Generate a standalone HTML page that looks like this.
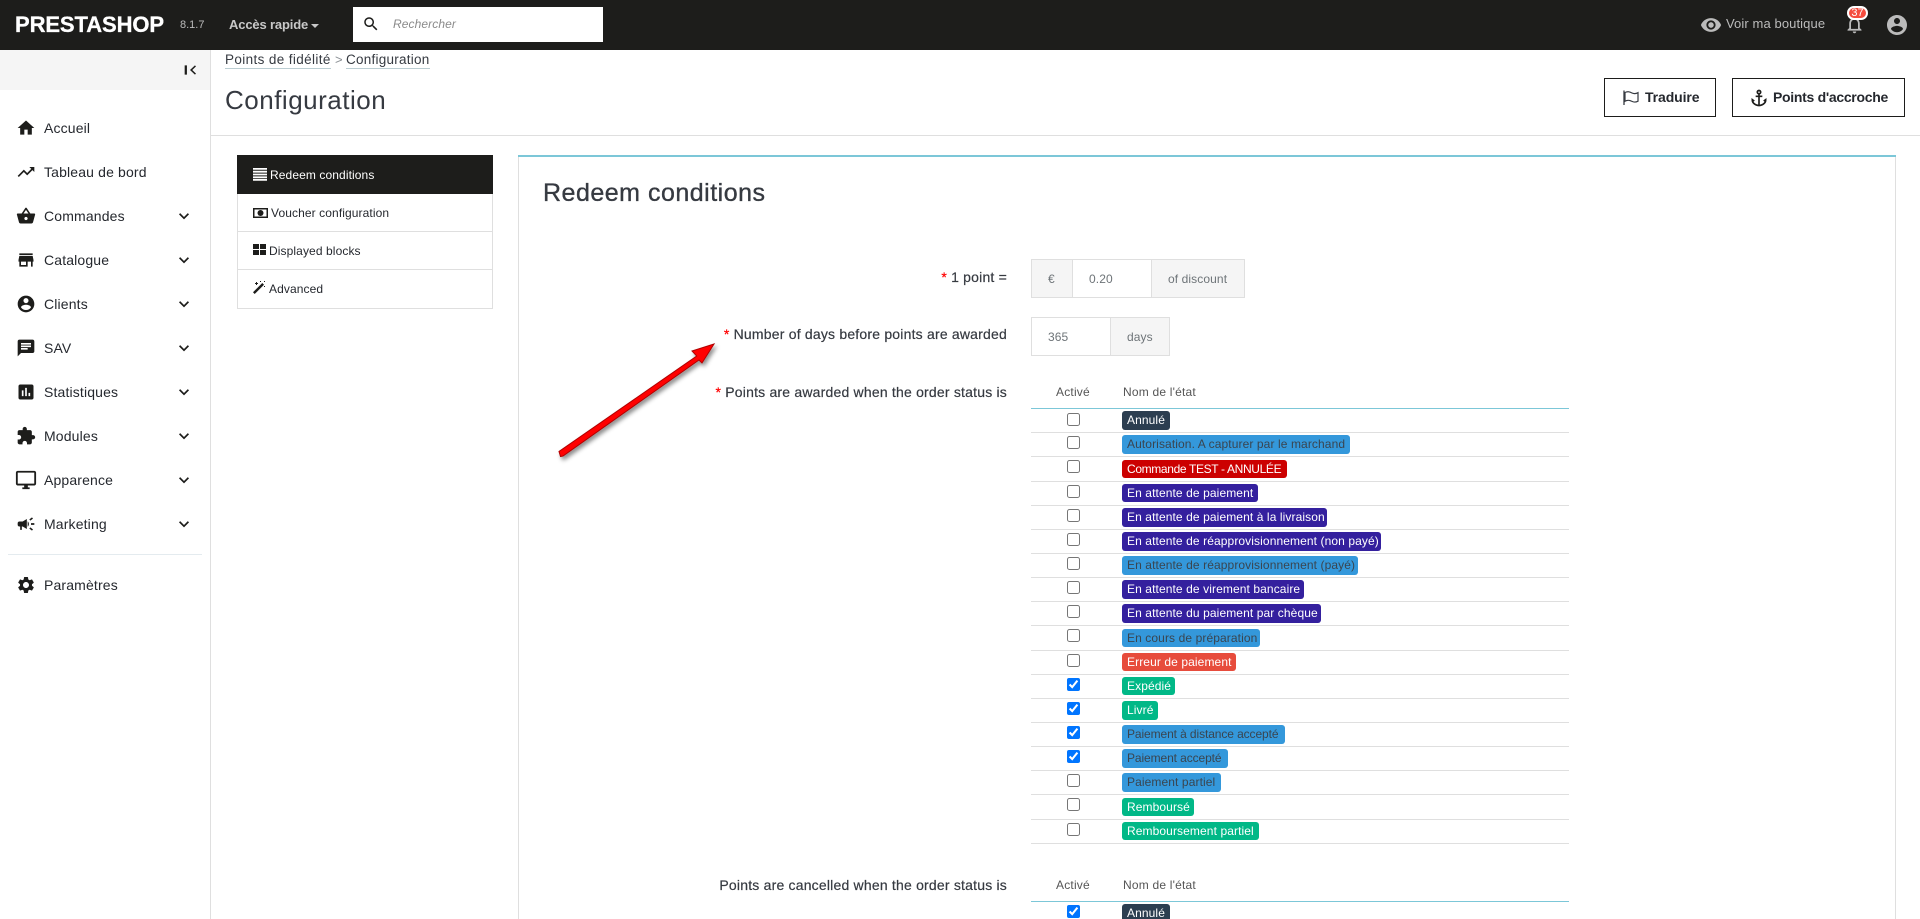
<!DOCTYPE html>
<html lang="fr"><head><meta charset="utf-8"><title>Configuration</title>
<style>
html,body{margin:0;padding:0;width:1920px;height:919px;overflow:hidden;background:#fff}
body{position:relative;font-family:"Liberation Sans",sans-serif;color:#363a41}
.t{position:absolute;white-space:nowrap;line-height:20px;height:20px}
.b{position:absolute}
svg{position:absolute;display:block}
.n{left:44px;font-size:14px;letter-spacing:.15px;color:#25282e}
.r{right:913px;font-size:14px;letter-spacing:.2px;color:#363a41;text-align:right;-webkit-text-stroke:.2px #363a41}
.r i{font-style:normal;color:#f00;-webkit-text-stroke:.2px #f00}
.g{font-size:12px;letter-spacing:.1px;color:#6e7478}
.m{font-size:12px;letter-spacing:.1px;color:#25282e}
.h{font-size:12px;color:#555;letter-spacing:.2px}
.bd{position:absolute;left:1122px;border-radius:3px;font-size:12px;letter-spacing:.1px;padding-left:5px;box-sizing:border-box;white-space:nowrap;line-height:19px;height:19px}
.w{color:#fff}.k{color:#3a4550}
.bl{background:#3498db}.pu{background:#34209e}.gr{background:#01b887}
.ln{position:absolute;left:1031px;width:538px;height:1px;background:#dfdfdf}
input{position:absolute;left:1067px;margin:0;width:13px;height:13px}
</style></head><body>

<div class="b" style="left:0;top:0;width:1920px;height:50px;background:#1d1d1b"></div>
<div class="t" style="left:15px;top:15px;font-size:22px;font-weight:bold;color:#fff;letter-spacing:-.1px;-webkit-text-stroke:.3px #fff">PRESTASHOP</div>
<div class="t" style="left:180px;top:15px;font-size:11px;color:#bbb">8.1.7</div>
<div class="t" style="left:229px;top:15px;font-size:13px;font-weight:bold;color:#c8c8c8;letter-spacing:-.15px">Accès rapide</div>
<div class="b" style="left:311px;top:24px;width:0;height:0;border-left:4.5px solid transparent;border-right:4.5px solid transparent;border-top:4.5px solid #c8c8c8"></div>
<div class="b" style="left:353px;top:7px;width:250px;height:35px;background:#fff"></div>
<svg style="left:362px;top:15px" width="18" height="18" viewBox="0 0 24 24" fill="#1d1d1b"><path d="M15.5 14h-.79l-.28-.27C15.41 12.59 16 11.11 16 9.5 16 5.91 13.09 3 9.5 3S3 5.91 3 9.5 5.91 16 9.5 16c1.61 0 3.09-.59 4.23-1.57l.27.28v.79l5 4.99L20.49 19l-4.99-5zm-6 0C7.01 14 5 11.99 5 9.5S7.01 5 9.5 5 14 7.01 14 9.5 11.99 14 9.5 14z"/></svg>
<div class="t" style="left:393px;top:14px;font-size:12px;font-style:italic;color:#8a8a8a;letter-spacing:.1px">Rechercher</div>
<svg style="left:1700px;top:14px" width="22" height="22" viewBox="0 0 24 24" fill="#bbb"><path d="M12 4.5C7 4.5 2.73 7.61 1 12c1.73 4.39 6 7.5 11 7.5s9.27-3.11 11-7.5c-1.73-4.39-6-7.5-11-7.5zM12 17c-2.76 0-5-2.24-5-5s2.24-5 5-5 5 2.24 5 5-2.24 5-5 5zm0-8c-1.66 0-3 1.34-3 3s1.34 3 3 3 3-1.34 3-3-1.34-3-3-3z"/></svg>
<div class="t" style="left:1726px;top:14px;font-size:13px;color:#bbb;letter-spacing:.1px">Voir ma boutique</div>
<svg style="left:1844px;top:14px" width="21" height="21" viewBox="0 0 24 24" fill="#bbb"><path d="M12 22c1.1 0 2-.9 2-2h-4c0 1.1.9 2 2 2zm6-6v-5c0-3.07-1.63-5.64-4.5-6.32V4c0-.83-.67-1.5-1.5-1.5s-1.5.67-1.5 1.5v.68C7.64 5.36 6 7.92 6 11v5l-2 2v1h16v-1l-2-2zm-2 1H8v-6c0-2.48 1.51-4.5 4-4.5s4 2.02 4 4.5v6z"/></svg>
<div class="b" style="left:1847px;top:6px;width:21px;height:14px;box-sizing:border-box;border:2px solid #fff;border-radius:7px;background:#f54c3e;color:#fff;font-size:11px;line-height:10px;text-align:center">37</div>
<svg style="left:1885px;top:13px" width="24" height="24" viewBox="0 0 24 24" fill="#bbb"><path d="M12 2C6.48 2 2 6.48 2 12s4.48 10 10 10 10-4.48 10-10S17.52 2 12 2zm0 3c1.66 0 3 1.34 3 3s-1.34 3-3 3-3-1.34-3-3 1.34-3 3-3zm0 14.2c-2.5 0-4.71-1.28-6-3.22.03-1.99 4-3.08 6-3.08 1.99 0 5.97 1.09 6 3.08-1.29 1.94-3.5 3.22-6 3.22z"/></svg>

<div class="b" style="left:0;top:50px;width:210px;height:40px;background:#f5f5f5"></div>
<div class="b" style="left:210px;top:50px;width:1px;height:869px;background:#dfdfdf"></div>
<svg style="left:182px;top:62px" width="16" height="16" viewBox="0 0 24 24" fill="#1d1d1b"><path d="M4 5h3.4v14H4zM21 17.4L15.4 12 21 6.6 19.4 5 12 12l7.4 7z"/></svg>

<svg style="left:16px;top:118px" width="20" height="20" viewBox="0 0 24 24" fill="#1d1d1b"><path d="M10 20v-6h4v6h5v-8h3L12 3 2 12h3v8z"/></svg>
<div class="t n" style="top:118px">Accueil</div>
<svg style="left:16px;top:162px" width="20" height="20" viewBox="0 0 24 24" fill="#1d1d1b"><path d="M16 6l2.29 2.29-4.88 4.88-4-4L2 16.59 3.41 18l6-6 4 4 6.3-6.29L22 12V6z"/></svg>
<div class="t n" style="top:162px">Tableau de bord</div>
<svg style="left:16px;top:206px" width="20" height="20" viewBox="0 0 24 24" fill="#1d1d1b"><path d="M17.21 9l-4.38-6.56c-.19-.28-.51-.42-.83-.42-.32 0-.64.14-.83.43L6.79 9H2c-.55 0-1 .45-1 1 0 .09.01.18.04.27l2.54 9.27c.23.84 1 1.46 1.92 1.46h13c.92 0 1.69-.62 1.93-1.46l2.54-9.27L23 10c0-.55-.45-1-1-1h-4.79zM9 9l3-4.4L15 9H9zm3 8c-1.1 0-2-.9-2-2s.9-2 2-2 2 .9 2 2-.9 2-2 2z"/></svg>
<div class="t n" style="top:206px">Commandes</div>
<svg style="left:16px;top:250px" width="20" height="20" viewBox="0 0 24 24" fill="#1d1d1b"><path d="M20 4H4v2h16V4zm1 10v-2l-1-5H4l-1 5v2h1v6h10v-6h4v6h2v-6h1zm-9 4H6v-4h6v4z"/></svg>
<div class="t n" style="top:250px">Catalogue</div>
<svg style="left:16px;top:294px" width="20" height="20" viewBox="0 0 24 24" fill="#1d1d1b"><path d="M12 2C6.48 2 2 6.48 2 12s4.48 10 10 10 10-4.48 10-10S17.52 2 12 2zm0 3c1.66 0 3 1.34 3 3s-1.34 3-3 3-3-1.34-3-3 1.34-3 3-3zm0 14.2c-2.5 0-4.71-1.28-6-3.22.03-1.99 4-3.08 6-3.08 1.99 0 5.97 1.09 6 3.08-1.29 1.94-3.5 3.22-6 3.22z"/></svg>
<div class="t n" style="top:294px">Clients</div>
<svg style="left:16px;top:338px" width="20" height="20" viewBox="0 0 24 24" fill="#1d1d1b"><path d="M20 2H4c-1.1 0-1.99.9-1.99 2L2 22l4-4h14c1.1 0 2-.9 2-2V4c0-1.1-.9-2-2-2zM6 9h12v2H6V9zm8 5H6v-2h8v2zm4-6H6V6h12v2z"/></svg>
<div class="t n" style="top:338px">SAV</div>
<svg style="left:16px;top:382px" width="20" height="20" viewBox="0 0 24 24" fill="#1d1d1b"><path d="M19 3H5c-1.1 0-2 .9-2 2v14c0 1.1.9 2 2 2h14c1.1 0 2-.9 2-2V5c0-1.1-.9-2-2-2zM9 17H7v-7h2v7zm4 0h-2V7h2v10zm4 0h-2v-4h2v4z"/></svg>
<div class="t n" style="top:382px">Statistiques</div>
<svg style="left:16px;top:426px" width="20" height="20" viewBox="0 0 24 24" fill="#1d1d1b"><path d="M20.5 11H19V7c0-1.1-.9-2-2-2h-4V3.5C13 2.12 11.88 1 10.5 1S8 2.12 8 3.5V5H4c-1.1 0-1.99.9-1.99 2v3.8H3.5c1.49 0 2.7 1.21 2.7 2.7s-1.21 2.7-2.7 2.7H2V20c0 1.1.9 2 2 2h3.8v-1.5c0-1.49 1.21-2.7 2.7-2.7 1.49 0 2.7 1.21 2.7 2.7V22H17c1.1 0 2-.9 2-2v-4h1.5c1.38 0 2.5-1.12 2.5-2.5S21.88 11 20.5 11z"/></svg>
<div class="t n" style="top:426px">Modules</div>
<svg style="left:15px;top:469px" width="22" height="22" viewBox="0 0 24 24" fill="#1d1d1b"><path d="M21 2H3c-1.1 0-2 .9-2 2v12c0 1.1.9 2 2 2h7v2H8v2h8v-2h-2v-2h7c1.1 0 2-.9 2-2V4c0-1.1-.9-2-2-2zm0 14H3V4h18v12z"/></svg>
<div class="t n" style="top:470px">Apparence</div>
<svg style="left:16px;top:514px" width="20" height="20" viewBox="0 0 24 24" fill="#1d1d1b"><path d="M18 11v2h4v-2h-4zm-2 6.61c.96.71 2.21 1.65 3.2 2.39.4-.53.8-1.07 1.2-1.6-.99-.74-2.24-1.68-3.2-2.4-.4.54-.8 1.08-1.2 1.61zM20.4 5.6c-.4-.53-.8-1.07-1.2-1.6-.99.74-2.24 1.68-3.2 2.4.4.53.8 1.07 1.2 1.6.96-.72 2.21-1.65 3.2-2.4zM4 9c-1.1 0-2 .9-2 2v2c0 1.1.9 2 2 2h1v4h2v-4h1l5 3V6L8 9H4zm11.5 3c0-1.33-.58-2.53-1.5-3.35v6.69c.92-.81 1.5-2.01 1.5-3.34z"/></svg>
<div class="t n" style="top:514px">Marketing</div>
<div class="b" style="left:8px;top:554px;width:194px;height:1px;background:#e4ebef"></div>
<svg style="left:16px;top:575px" width="20" height="20" viewBox="0 0 24 24" fill="#1d1d1b"><path d="M19.14 12.94c.04-.3.06-.61.06-.94 0-.32-.02-.64-.07-.94l2.03-1.58c.18-.14.23-.41.12-.61l-1.92-3.32c-.12-.22-.37-.29-.59-.22l-2.39.96c-.5-.38-1.03-.7-1.62-.94l-.36-2.54c-.04-.24-.24-.41-.48-.41h-3.84c-.24 0-.43.17-.47.41l-.36 2.54c-.59.24-1.13.57-1.62.94l-2.39-.96c-.22-.08-.47 0-.59.22L2.74 8.87c-.12.21-.08.47.12.61l2.03 1.58c-.05.3-.09.63-.09.94s.02.64.07.94l-2.03 1.58c-.18.14-.23.41-.12.61l1.92 3.32c.12.22.37.29.59.22l2.39-.96c.5.38 1.03.7 1.62.94l.36 2.54c.05.24.24.41.48.41h3.84c.24 0 .44-.17.47-.41l.36-2.54c.59-.24 1.13-.56 1.62-.94l2.39.96c.22.08.47 0 .59-.22l1.92-3.32c.12-.22.07-.47-.12-.61l-2.01-1.58zM12 15.6c-1.98 0-3.6-1.62-3.6-3.6s1.62-3.6 3.6-3.6 3.6 1.62 3.6 3.6-1.62 3.6-3.6 3.6z"/></svg>
<div class="t n" style="top:575px">Paramètres</div>
<svg style="left:174px;top:206px" width="20" height="20" viewBox="0 0 24 24" fill="#1d1d1b"><path d="M16.59 8.59L12 13.17 7.41 8.59 6 10l6 6 6-6z"/></svg>
<svg style="left:174px;top:250px" width="20" height="20" viewBox="0 0 24 24" fill="#1d1d1b"><path d="M16.59 8.59L12 13.17 7.41 8.59 6 10l6 6 6-6z"/></svg>
<svg style="left:174px;top:294px" width="20" height="20" viewBox="0 0 24 24" fill="#1d1d1b"><path d="M16.59 8.59L12 13.17 7.41 8.59 6 10l6 6 6-6z"/></svg>
<svg style="left:174px;top:338px" width="20" height="20" viewBox="0 0 24 24" fill="#1d1d1b"><path d="M16.59 8.59L12 13.17 7.41 8.59 6 10l6 6 6-6z"/></svg>
<svg style="left:174px;top:382px" width="20" height="20" viewBox="0 0 24 24" fill="#1d1d1b"><path d="M16.59 8.59L12 13.17 7.41 8.59 6 10l6 6 6-6z"/></svg>
<svg style="left:174px;top:426px" width="20" height="20" viewBox="0 0 24 24" fill="#1d1d1b"><path d="M16.59 8.59L12 13.17 7.41 8.59 6 10l6 6 6-6z"/></svg>
<svg style="left:174px;top:470px" width="20" height="20" viewBox="0 0 24 24" fill="#1d1d1b"><path d="M16.59 8.59L12 13.17 7.41 8.59 6 10l6 6 6-6z"/></svg>
<svg style="left:174px;top:514px" width="20" height="20" viewBox="0 0 24 24" fill="#1d1d1b"><path d="M16.59 8.59L12 13.17 7.41 8.59 6 10l6 6 6-6z"/></svg>

<div class="t" style="left:225px;top:50px;font-size:13.5px;letter-spacing:.37px;color:#363a41;border-bottom:1px solid #bbcdd2;height:18px;line-height:20px">Points de fidélité</div>
<div class="t" style="left:335px;top:50px;font-size:13px;color:#8a8f94">&gt;</div>
<div class="t" style="left:346px;top:50px;font-size:13.5px;letter-spacing:.25px;color:#363a41;border-bottom:1px solid #bbcdd2;height:18px;line-height:20px">Configuration</div>
<div class="t" style="left:225px;top:85px;font-size:26px;line-height:30px;height:30px;letter-spacing:.5px;color:#363a41">Configuration</div>
<div class="b" style="left:211px;top:135px;width:1709px;height:1px;background:#dfdfdf"></div>

<div class="b" style="left:1604px;top:78px;width:112px;height:39px;box-sizing:border-box;border:1px solid #1d1d1b"></div>
<svg style="left:1622px;top:90px" width="18" height="16" viewBox="0 0 18 16" fill="none" stroke="#363a41"><path d="M2 0.5V15" stroke-width="1.3"/><path d="M3 2.5C6 1 8 2 10 3s4 .8 6-.3v8.5c-2 1-4 1.2-6 .2s-4-1.8-7-.2z" stroke-width="1.2"/></svg>
<div class="t" style="left:1645px;top:87px;font-size:14px;font-weight:bold;color:#25282e;letter-spacing:-.1px">Traduire</div>
<div class="b" style="left:1732px;top:78px;width:173px;height:39px;box-sizing:border-box;border:1px solid #1d1d1b"></div>
<svg style="left:1749px;top:88px" width="20" height="20" viewBox="0 0 24 24" fill="#1d1d1b"><path d="M17 15l1.55 1.55c-.96 1.69-3.33 3.04-5.55 3.37V11h3V9h-3V7.82C14.16 7.4 15 6.3 15 5c0-1.65-1.35-3-3-3S9 3.35 9 5c0 1.3.84 2.4 2 2.82V9H8v2h3v8.92c-2.22-.33-4.59-1.68-5.55-3.37L7 15l-4-3v3c0 3.88 4.92 7 9 7s9-3.12 9-7v-3l-4 3zM12 4c.55 0 1 .45 1 1s-.45 1-1 1-1-.45-1-1 .45-1 1-1z"/></svg>
<div class="t" style="left:1773px;top:87px;font-size:14px;font-weight:bold;color:#25282e;letter-spacing:-.3px">Points d'accroche</div>

<div class="b" style="left:237px;top:155px;width:256px;height:154px;box-sizing:border-box;border:1px solid #dfdfdf;border-top:0"></div>
<div class="b" style="left:237px;top:155px;width:256px;height:39px;background:#1d1d1b"></div>
<div class="b" style="left:238px;top:231px;width:254px;height:1px;background:#dfdfdf"></div>
<div class="b" style="left:238px;top:269px;width:254px;height:1px;background:#dfdfdf"></div>
<svg style="left:253px;top:167px" width="14" height="14" viewBox="0 0 14 14" fill="#fff"><path d="M0 1h14v1.8H0zM0 3.8h14v1.8H0zM0 6.6h14v1.8H0zM0 9.4h14v1.8H0zM0 12h14v1.8H0z"/></svg>
<div class="t m" style="left:270px;top:165px;color:#fff">Redeem conditions</div>
<svg style="left:253px;top:208px" width="15" height="10" viewBox="0 0 15 10"><rect x=".7" y=".7" width="13.6" height="8.6" fill="#fff" stroke="#1d1d1b" stroke-width="1.6"/><circle cx="7.5" cy="5" r="3" fill="#1d1d1b"/></svg>
<div class="t m" style="left:271px;top:203px">Voucher configuration</div>
<svg style="left:253px;top:244px" width="13" height="11" viewBox="0 0 13 11" fill="#1d1d1b"><path d="M0 0h6v5H0zM7 0h6v5H7zM0 6h6v5H0zM7 6h6v5H7z"/></svg>
<div class="t m" style="left:269px;top:241px">Displayed blocks</div>
<svg style="left:253px;top:281px" width="13" height="13" viewBox="0 0 13 13" fill="#1d1d1b"><path d="M0 11.3L9.3 2l1.7 1.7L1.7 13z"/><path d="M3 1h1v1h1v1H4v1H3V3H2V2h1zM7 0h1v1H7zM11 5h1v1h-1zM11 0h1v1h-1z"/></svg>
<div class="t m" style="left:269px;top:279px">Advanced</div>

<div class="b" style="left:518px;top:155px;width:1378px;height:764px;box-sizing:border-box;border-left:1px solid #dfdfdf;border-right:1px solid #dfdfdf"></div>
<div class="b" style="left:518px;top:155px;width:1378px;height:2px;background:#7cc7d8"></div>
<div class="t" style="left:543px;top:178px;font-size:25px;line-height:30px;height:30px;color:#363a41;letter-spacing:.5px;-webkit-text-stroke:.35px #363a41">Redeem conditions</div>

<div class="t r" style="top:267px"><i>*</i> 1 point =</div>
<div class="t r" style="top:324px"><i>*</i> Number of days before points are awarded</div>
<div class="t r" style="top:382px"><i>*</i> Points are awarded when the order status is</div>
<div class="t r" style="top:875px">Points are cancelled when the order status is</div>

<div class="b" style="left:1031px;top:259px;width:214px;height:39px;box-sizing:border-box;border:1px solid #dfdfdf;background:#f5f5f5"></div>
<div class="b" style="left:1072px;top:259px;width:80px;height:39px;box-sizing:border-box;border:1px solid #dfdfdf;background:#fff"></div>
<div class="t g" style="left:1048px;top:269px">€</div>
<div class="t g" style="left:1089px;top:269px">0.20</div>
<div class="t g" style="left:1168px;top:269px">of discount</div>
<div class="b" style="left:1031px;top:317px;width:139px;height:39px;box-sizing:border-box;border:1px solid #dfdfdf;background:#f5f5f5"></div>
<div class="b" style="left:1031px;top:317px;width:80px;height:39px;box-sizing:border-box;border:1px solid #dfdfdf;background:#fff"></div>
<div class="t g" style="left:1048px;top:327px">365</div>
<div class="t g" style="left:1127px;top:327px">days</div>

<svg style="left:540px;top:330px" width="190" height="140" viewBox="540 330 190 140">
<defs><filter id="s" x="-20%" y="-20%" width="150%" height="150%"><feDropShadow dx="2" dy="3" stdDeviation="2" flood-color="#000" flood-opacity=".45"/></filter></defs>
<path filter="url(#s)" d="M714 344L692 351L696.7 356L559 451.5L560.5 456.5L563 456L699 360L702 363Z" fill="#f00" stroke="#b00000" stroke-width="1"/>
</svg>

<div class="t h" style="left:1056px;top:382px">Activé</div>
<div class="t h" style="left:1123px;top:382px">Nom de l'état</div>
<div class="b" style="left:1031px;top:408px;width:538px;height:1px;background:#7cc7d8"></div>
<div class="ln" style="top:432px"></div>
<div class="ln" style="top:456px"></div>
<div class="ln" style="top:481px"></div>
<div class="ln" style="top:505px"></div>
<div class="ln" style="top:529px"></div>
<div class="ln" style="top:553px"></div>
<div class="ln" style="top:577px"></div>
<div class="ln" style="top:601px"></div>
<div class="ln" style="top:625px"></div>
<div class="ln" style="top:650px"></div>
<div class="ln" style="top:674px"></div>
<div class="ln" style="top:698px"></div>
<div class="ln" style="top:722px"></div>
<div class="ln" style="top:746px"></div>
<div class="ln" style="top:770px"></div>
<div class="ln" style="top:794px"></div>
<div class="ln" style="top:819px"></div>
<div class="ln" style="top:843px"></div>

<input type="checkbox" style="top:413px"><div class="bd w" style="top:411px;width:48px;background:#2c3e50">Annulé</div>
<input type="checkbox" style="top:436px"><div class="bd k bl" style="top:435px;width:228px">Autorisation. A capturer par le marchand</div>
<input type="checkbox" style="top:460px"><div class="bd w" style="top:460px;width:165px;height:18px;background:#c00;letter-spacing:-.35px">Commande TEST - ANNULÉE</div>
<input type="checkbox" style="top:485px"><div class="bd w pu" style="top:484px;width:136px;height:18px">En attente de paiement</div>
<input type="checkbox" style="top:509px"><div class="bd w pu" style="top:508px;width:205px">En attente de paiement à la livraison</div>
<input type="checkbox" style="top:533px"><div class="bd w pu" style="top:532px;width:259px">En attente de réapprovisionnement (non payé)</div>
<input type="checkbox" style="top:557px"><div class="bd k bl" style="top:556px;width:236px">En attente de réapprovisionnement (payé)</div>
<input type="checkbox" style="top:581px"><div class="bd w pu" style="top:580px;width:182px">En attente de virement bancaire</div>
<input type="checkbox" style="top:605px"><div class="bd w pu" style="top:604px;width:199px">En attente du paiement par chèque</div>
<input type="checkbox" style="top:629px"><div class="bd k bl" style="top:629px;width:138px;height:18px">En cours de préparation</div>
<input type="checkbox" style="top:654px"><div class="bd w" style="top:653px;width:114px;height:18px;background:#e74c3c">Erreur de paiement</div>
<input type="checkbox" checked style="top:678px"><div class="bd w gr" style="top:677px;width:53px;height:18px">Expédié</div>
<input type="checkbox" checked style="top:702px"><div class="bd w gr" style="top:701px;width:36px">Livré</div>
<input type="checkbox" checked style="top:726px"><div class="bd k bl" style="top:725px;width:163px;letter-spacing:-.1px">Paiement à distance accepté</div>
<input type="checkbox" checked style="top:750px"><div class="bd k bl" style="top:749px;width:106px;letter-spacing:-.1px">Paiement accepté</div>
<input type="checkbox" style="top:774px"><div class="bd k bl" style="top:773px;width:99px">Paiement partiel</div>
<input type="checkbox" style="top:798px"><div class="bd w gr" style="top:798px;width:72px;height:18px">Remboursé</div>
<input type="checkbox" style="top:823px"><div class="bd w gr" style="top:822px;width:137px;height:18px">Remboursement partiel</div>

<div class="t h" style="left:1056px;top:875px">Activé</div>
<div class="t h" style="left:1123px;top:875px">Nom de l'état</div>
<div class="b" style="left:1031px;top:901px;width:538px;height:1px;background:#7cc7d8"></div>
<input type="checkbox" checked style="top:905px"><div class="bd w" style="top:904px;width:48px;background:#2c3e50">Annulé</div>
</body></html>
